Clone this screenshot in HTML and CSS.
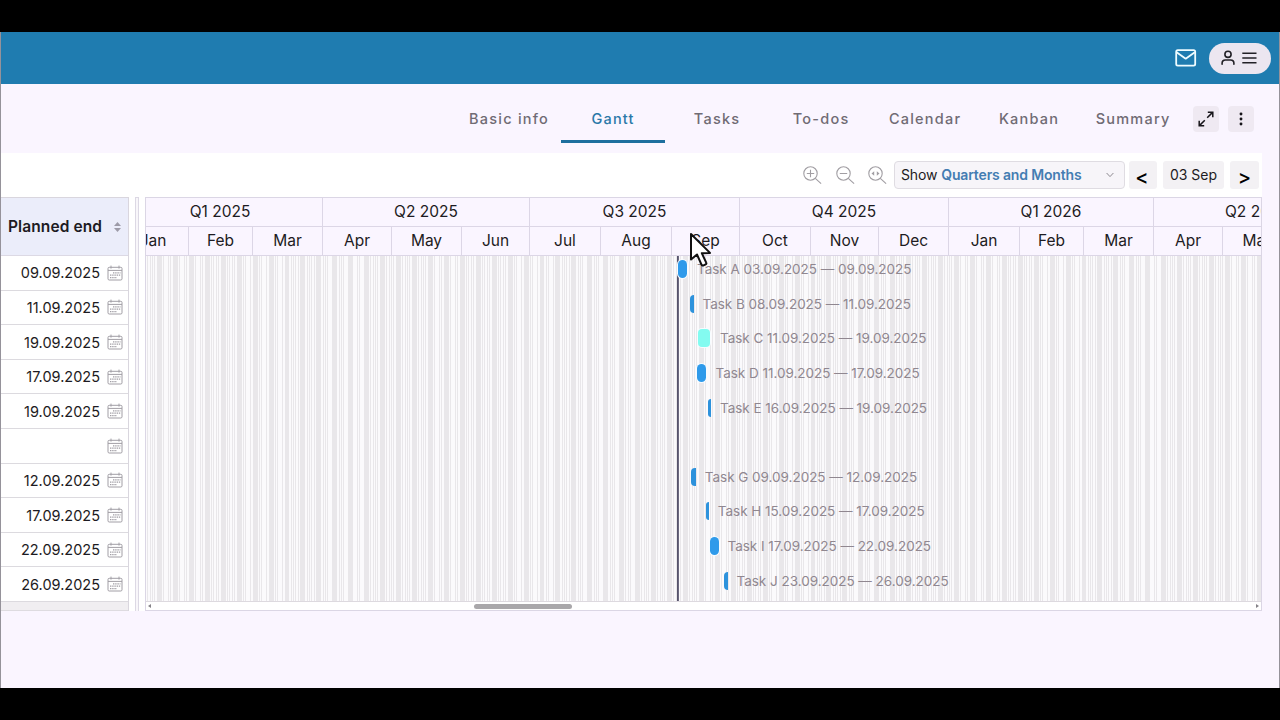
FILE: index.html
```html
<!DOCTYPE html>
<html lang="en">
<head>
<meta charset="utf-8">
<title>Gantt</title>
<link rel="stylesheet" href="styles.css">
</head>
<body>
<svg class="defs" width="0" height="0" aria-hidden="true">
  <symbol id="cal" viewBox="0 0 16 16"><g fill="none" stroke="#a19ea5"><rect x="1" y="2.3" width="14" height="12.7" rx="1.2"/><path d="M1 5.4h14M4 .6v3M12 .6v3"/></g><path d="M6 7.8h7.5M3 10.2h10.5M3 12.6h7" stroke="#a19ea5" stroke-width="1.2" stroke-dasharray="1.4 .8" fill="none"/></symbol>
</svg>
<div class="screen">
  <header class="topbar">
    <svg class="mail" width="22" height="18" viewBox="0 0 22 18" fill="none" stroke="#effcff" stroke-width="1.8" stroke-linejoin="round"><rect x="1.2" y="1.2" width="19" height="15.4" rx="1.6"/><path d="M1.6 3.2l9.1 6.5 9.1-6.5"/></svg>
    <button class="user">
      <svg width="14" height="16" viewBox="0 0 14 16" fill="none" stroke="#222026" stroke-width="1.6" stroke-linecap="round"><circle cx="7" cy="4.3" r="3.1"/><path d="M1.1 14.3v-1c0-2 1.3-3.3 3.3-3.3h5.2c2 0 3.3 1.3 3.3 3.3v1"/></svg>
      <svg width="15" height="12" viewBox="0 0 15 12" stroke="#222026" stroke-width="1.5"><path d="M.3 1.2h14.2M.3 6h14.2M.3 10.8h14.2"/></svg>
    </button>
  </header>
  <nav class="tabs">
    <a class="tab">Basic info</a><a class="tab active">Gantt</a><a class="tab">Tasks</a><a class="tab">To-dos</a><a class="tab">Calendar</a><a class="tab">Kanban</a><a class="tab">Summary</a>
    <button class="sq expand"><svg width="16" height="16" viewBox="0 0 16 16" fill="none" stroke="#17151a" stroke-width="1.5"><path d="M9.2 6.8L14.6 1.4M9.8 1.2h5v5M6.8 9.2L1.4 14.6M1.2 9.8v5h5"/></svg></button>
    <button class="sq"><svg width="4" height="14" viewBox="0 0 4 14" fill="#17151a"><circle cx="2" cy="2" r="1.45"/><circle cx="2" cy="7" r="1.45"/><circle cx="2" cy="12" r="1.45"/></svg></button>
  </nav>
  <main class="panel">
    <div class="tools">
      <svg class="zoom" width="19" height="19" viewBox="0 0 19 19"><circle cx="7.5" cy="7.5" r="6.7"/><path d="M12.3 12.3l5.8 5.4M3.8 7.5h7.4M7.5 3.8v7.4"/></svg>
      <svg class="zoom" width="19" height="19" viewBox="0 0 19 19"><circle cx="7.5" cy="7.5" r="6.7"/><path d="M12.3 12.3l5.8 5.4M3.8 7.5h7.4"/></svg>
      <svg class="zoom" width="19" height="19" viewBox="0 0 19 19"><circle cx="7.5" cy="7.5" r="6.7"/><path d="M12.3 12.3l5.8 5.4"/><path class="solid" d="M6.2 5.2v4.6L3.5 7.5zM8.8 5.2v4.6l2.7-2.3z"/></svg>
      <div class="select"><span>Show</span><b>Quarters and Months</b><svg width="8" height="6" viewBox="0 0 8 6" fill="none" stroke="#8d8a90"><path d="M.6 1l3.4 3.6L7.4 1"/></svg></div>
      <button class="step prev">&lt;</button>
      <button class="step date">03 Sep</button>
      <button class="step next">&gt;</button>
    </div>
    <div class="chart">
      <section class="grid">
        <div class="ghead"><span>Planned end</span><svg width="7" height="10" viewBox="0 0 7 10" fill="#9d9ba8"><path d="M0 4l3.5-4L7 4zM0 6l3.5 4L7 6z"/></svg></div>
        <div class="cell"><span>09.09.2025</span><svg><use href="#cal"/></svg></div>
        <div class="cell"><span>11.09.2025</span><svg><use href="#cal"/></svg></div>
        <div class="cell"><span>19.09.2025</span><svg><use href="#cal"/></svg></div>
        <div class="cell"><span>17.09.2025</span><svg><use href="#cal"/></svg></div>
        <div class="cell"><span>19.09.2025</span><svg><use href="#cal"/></svg></div>
        <div class="cell"><span></span><svg><use href="#cal"/></svg></div>
        <div class="cell"><span>12.09.2025</span><svg><use href="#cal"/></svg></div>
        <div class="cell"><span>17.09.2025</span><svg><use href="#cal"/></svg></div>
        <div class="cell"><span>22.09.2025</span><svg><use href="#cal"/></svg></div>
        <div class="cell"><span>26.09.2025</span><svg><use href="#cal"/></svg></div>
        <div class="gfoot"></div>
      </section>
      <div class="splitter"></div>
      <section class="timeline">
        <div class="scale">
          <div style="width:205px">Q1 2025</div><div style="width:207px">Q2 2025</div><div style="width:210px">Q3 2025</div><div style="width:209px">Q4 2025</div><div style="width:205px">Q1 2026</div><div style="width:207px">Q2 2026</div>
        </div>
        <div class="scale months">
          <div style="width:71px">Jan</div><div style="width:64px">Feb</div><div style="width:70px">Mar</div><div style="width:69px">Apr</div><div style="width:70px">May</div><div style="width:68px">Jun</div><div style="width:71px">Jul</div><div style="width:71px">Aug</div><div style="width:68px">Sep</div><div style="width:71px">Oct</div><div style="width:68px">Nov</div><div style="width:70px">Dec</div><div style="width:71px">Jan</div><div style="width:64px">Feb</div><div style="width:70px">Mar</div><div style="width:69px">Apr</div><div style="width:71px">May</div>
        </div>
        <div class="rows">
          <div class="today"></div>
          <div class="row" style="padding-left:532px"><i class="bar" style="width:9px"></i><span style="margin-left:10px">Task A 03.09.2025 — 09.09.2025</span></div>
          <div class="row" style="padding-left:543.5px"><i class="bar cut" style="width:4px"></i><span style="margin-left:9px">Task B 08.09.2025 — 11.09.2025</span></div>
          <div class="row" style="padding-left:551.5px"><i class="bar mint" style="width:12.5px"></i><span style="margin-left:10px">Task C 11.09.2025 — 19.09.2025</span></div>
          <div class="row" style="padding-left:551px"><i class="bar" style="width:9px"></i><span style="margin-left:9.5px">Task D 11.09.2025 — 17.09.2025</span></div>
          <div class="row" style="padding-left:561.5px"><i class="bar cut" style="width:3.5px"></i><span style="margin-left:9px">Task E 16.09.2025 — 19.09.2025</span></div>
          <div class="row"></div>
          <div class="row" style="padding-left:545px"><i class="bar cut" style="width:4.5px"></i><span style="margin-left:9.3px">Task G 09.09.2025 — 12.09.2025</span></div>
          <div class="row" style="padding-left:559.5px"><i class="bar cut" style="width:3px"></i><span style="margin-left:9.3px">Task H 15.09.2025 — 17.09.2025</span></div>
          <div class="row" style="padding-left:564px"><i class="bar" style="width:9px"></i><span style="margin-left:8.5px">Task I 17.09.2025 — 22.09.2025</span></div>
          <div class="row" style="padding-left:578px"><i class="bar cut" style="width:4px"></i><span style="margin-left:8.5px">Task J 23.09.2025 — 26.09.2025</span></div>
        </div>
        <div class="scroll"><i class="larr"></i><i class="thumb"></i><i class="rarr"></i></div>
      </section>
    </div>
  </main>
</div>
<svg class="cursor" width="26" height="36" viewBox="0 0 26 36"><path d="M2 2v25.5l6-5 4.6 10.3c.4.8 1.2 1 2 .6l2-1c.8-.4 1-1 .6-1.8l-4.4-9.4 8.2-.3z" fill="#fff" stroke="#111" stroke-width="2" stroke-linejoin="round"/></svg>
</body>
</html>
```
FILE: styles.css
```css
* { box-sizing: border-box; }
body { margin: 0; width: 1280px; height: 720px; overflow: hidden; background: #000; padding: 32px 0; font-family: Inter, "Liberation Sans", sans-serif; color: #1d1b22; position: relative; }
button { border: 0; padding: 0; font: inherit; color: inherit; display: flex; align-items: center; justify-content: center; }
svg { display: block; flex: none; }
.defs { position: absolute; }
.screen { height: 656px; background: #faf5ff; border-left: 1px solid #95929a; border-right: 1px solid #95929a; overflow: hidden; }
.topbar { height: 52px; margin: 0 -1px; background: #1f7cb0; display: flex; justify-content: flex-end; align-items: center; padding-right: 9px; gap: 12px; }
.user { width: 62px; height: 31px; border-radius: 16px; background: #ece6f0; gap: 7px; padding-right: 2px; }
.tabs { height: 69px; display: flex; justify-content: flex-end; padding-right: 25px; }
.tab { width: 104px; height: 59px; border-bottom: 3px solid transparent; text-align: center; line-height: 70px; font-size: 14.5px; font-weight: 500; letter-spacing: 1.23px; color: #706b74; white-space: nowrap; position: relative; left: .6px; }
.tab.active { color: #2a78a8; border-color: #1d6f9e; }
.sq { width: 26px; height: 26px; border-radius: 4px; background: #efe9f2; margin: 21.5px 0 0 9px; }
.expand { margin-left: 8.5px; }
.panel { width: 1261px; height: 458px; background: #fff; }
.tools { height: 44px; display: flex; justify-content: flex-end; align-items: flex-start; padding: 7.5px 3px 0 0; }
.zoom { margin: 5px 13.5px 0 0; fill: none; stroke: #a19ea3; stroke-width: 1.1; }
.zoom .solid { fill: #a19ea3; stroke: none; }
.zoom:nth-child(3) { margin-right: 7px; }
.select { width: 231px; height: 28px; border: 1px solid #dfdce2; border-radius: 4px; background: #f7f5f9; display: flex; align-items: center; font-size: 14px; padding: 0 10px 0 6px; }
.select span { letter-spacing: -.15px; }
.select b { font-weight: 600; color: #447db2; margin-left: 4px; flex: 1; letter-spacing: -.16px; }
.step { height: 28px; background: #f3f1f4; border-radius: 3px; }
.prev, .next { font-size: 20px; font-weight: 500; color: #000; padding-top: 4px; }
.prev { width: 28px; margin-left: 4px; padding-right: 2px; }
.date { width: 61px; margin-left: 6px; font-size: 14px; }
.next { width: 29px; margin-left: 6px; }
.chart { display: flex; height: 414px; }
.grid { width: 128px; border-right: 1px solid #d9d6de; border-top: 1px solid #d9d6de; }
.ghead { height: 58px; background: #ebedfa; border-bottom: 1px solid #dcd9e4; display: flex; align-items: center; justify-content: space-between; padding: 0 7px 0 7px; font-size: 15.5px; font-weight: 600; }
.ghead span { letter-spacing: .1px; }
.cell { height: 34.62px; border-bottom: 1px solid #dcdadf; display: flex; align-items: center; justify-content: flex-end; padding-right: 5px; gap: 7px; font-size: 14.5px; }
.cell svg { width: 16px; height: 16px; }
.gfoot { height: 9px; background: #f0eef1; border-bottom: 1px solid #dedbe0; }
.splitter { width: 4px; margin: 0 6px; border: 1px solid #dcd8e4; border-width: 1px 1px 0; background: #f8f6fa; }
.timeline { width: 1117px; border: 1px solid #dbd6e5; overflow: hidden; position: relative; }
.scale { display: flex; height: 29px; width: 1300px; margin-left: -28px; background: #faf5ff; border-bottom: 1px solid #dcd6e6; font-size: 15.5px; line-height: 28px; }
.scale div { border-right: 1px solid #dcd6e6; text-align: center; flex: none; }
.rows { height: 345px; position: relative; background: repeating-linear-gradient(90deg, #fbfafc 0, #fbfafc 1.3px, #e9e7ea 1.3px, #e9e7ea 2.28px, #fbfafc 2.28px, #fbfafc 3.7px, #e9e7ea 3.7px, #e9e7ea 4.55px, #fbfafc 4.55px, #fbfafc 6px, #e9e7ea 6px, #e9e7ea 6.83px, #fbfafc 6.83px, #fbfafc 8.3px, #e9e7ea 8.3px, #e9e7ea 9.11px, #fbfafc 9.11px, #fbfafc 11px, #e9e7ea 11px, #e9e7ea 15.94px); }
.today { position: absolute; left: 531px; top: 0; width: 2px; height: 345px; background: linear-gradient(90deg, #4c4962, #77748a); }
.row { height: 34.65px; padding-top: 4px; display: flex; align-items: flex-start; font-size: 13.5px; color: #908790; white-space: nowrap; position: relative; letter-spacing: -.03px; }
.row span { line-height: 19px; }
.bar { height: 18px; border-radius: 4.5px; background: #2f9aea; box-shadow: 0 0 0 1px #f7fcff; flex: none; }
.bar.cut { border-radius: 4px 0 0 4px; box-shadow: none; background: #2d92dc; }
.bar.mint { background: #83fbf0; border-radius: 4px; }
.scroll { height: 9px; border-top: 1px solid #ddd9df; background: #fff; display: flex; align-items: center; padding: 0 2px; }
.thumb { width: 98px; height: 5px; border-radius: 3px; background: #a9a7aa; margin: 0 auto 0 323px; }
.larr, .rarr { border: 2.5px solid transparent; border-width: 2.5px 3px; }
.larr { border-right-color: #858288; border-left: 0; }
.rarr { border-left-color: #858288; border-right: 0; }
.cursor { position: absolute; left: 689px; top: 232px; }
```
